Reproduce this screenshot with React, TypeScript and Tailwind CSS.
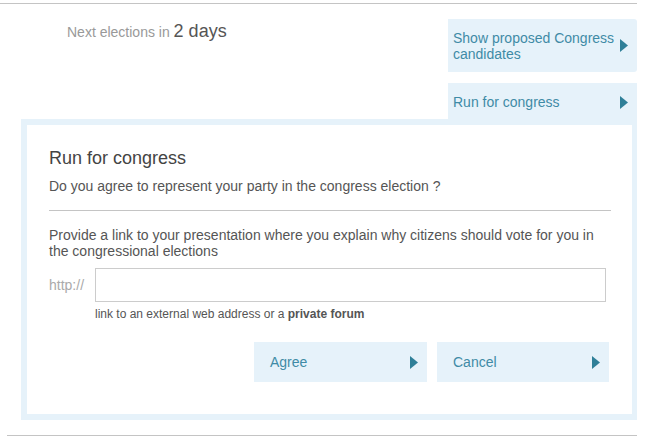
import React from "react";

function Arrow() {
  return (
    <svg width="8" height="13" viewBox="0 0 8 13" className="shrink-0">
      <polygon points="0,0 8,6.5 0,13" fill="#2f7f98" />
    </svg>
  );
}

function ActionButton({ label, width }: { label: string; width: string }) {
  return (
    <button
      className={`flex h-[40px] items-center justify-between bg-[#e6f2fa] pl-[16px] pr-[9px] text-[14px] text-[#3f8ba6] ${width}`}
    >
      <span>{label}</span>
      <Arrow />
    </button>
  );
}

export default function App() {
  return (
    <div
      className="min-h-[447px] w-[653px] bg-white pt-[3px]"
      style={{ fontFamily: '"Liberation Sans", Arial, sans-serif' }}
    >
      <div className="h-px w-[637px] bg-[#c4c4c4]" />

      {/* header row */}
      <div className="flex w-[637px] items-start justify-between pt-[15px]">
        <p className="pl-[67px] text-[14px] leading-[24px] text-[#999999]">
          Next elections in{" "}
          <span className="text-[18px] text-[#555555]">2 days</span>
        </p>
        <div className="flex w-[189px] flex-col gap-[11px]">
          <button className="flex h-[53px] items-center justify-between rounded-r-[3px] bg-[#e6f2fa] pl-[5px] pr-[9px] text-left text-[14px] leading-[16px] text-[#3f8ba6]">
            <span>
              Show proposed Congress
              <br />
              candidates
            </span>
            <Arrow />
          </button>
          <button className="flex h-[36px] items-center justify-between bg-[#e6f2fa] pt-[3px] pl-[5px] pr-[9px] text-left text-[14px] text-[#3f8ba6]">
            <span>Run for congress</span>
            <Arrow />
          </button>
        </div>
      </div>

      {/* panel */}
      <div className="ml-[21px] w-[616px] bg-[#e6f2fa] py-[6px] pl-[6px] pr-[5px]">
        <div className="bg-white pb-[32px] pl-[22px] pr-[21px] pt-[23px]">
          <h2 className="text-[18px] leading-[20px] text-[#444444]">Run for congress</h2>
          <p className="mt-[10px] text-[14px] leading-[16px] text-[#555555]">
            Do you agree to represent your party in the congress election ?
          </p>
          <div className="mt-[16px] h-px bg-[#c4c4c4]" />
          <p className="mt-[16px] text-[14px] leading-[16px] text-[#555555]">
            Provide a link to your presentation where you explain why citizens should vote for you in
            the congressional elections
          </p>
          <div className="mt-[9px] flex items-center">
            <span className="w-[46px] text-[14px] text-[#aaaaaa]">http://</span>
            <input
              type="text"
              className="h-[34px] w-[511px] border border-[#cccccc] bg-white px-2 text-[14px] outline-none"
            />
          </div>
          <p className="mt-[5px] pl-[46px] text-[12px] leading-[14px] text-[#555555]">
            link to an external web address or a <b className="font-bold">private forum</b>
          </p>
          <div className="mt-[21px] flex justify-end gap-[10px] pr-[2px]">
            <ActionButton label="Agree" width="w-[173px]" />
            <ActionButton label="Cancel" width="w-[172px]" />
          </div>
        </div>
      </div>

      <div className="ml-[7px] mt-[15px] h-px w-[630px] bg-[#c4c4c4]" />
    </div>
  );
}
